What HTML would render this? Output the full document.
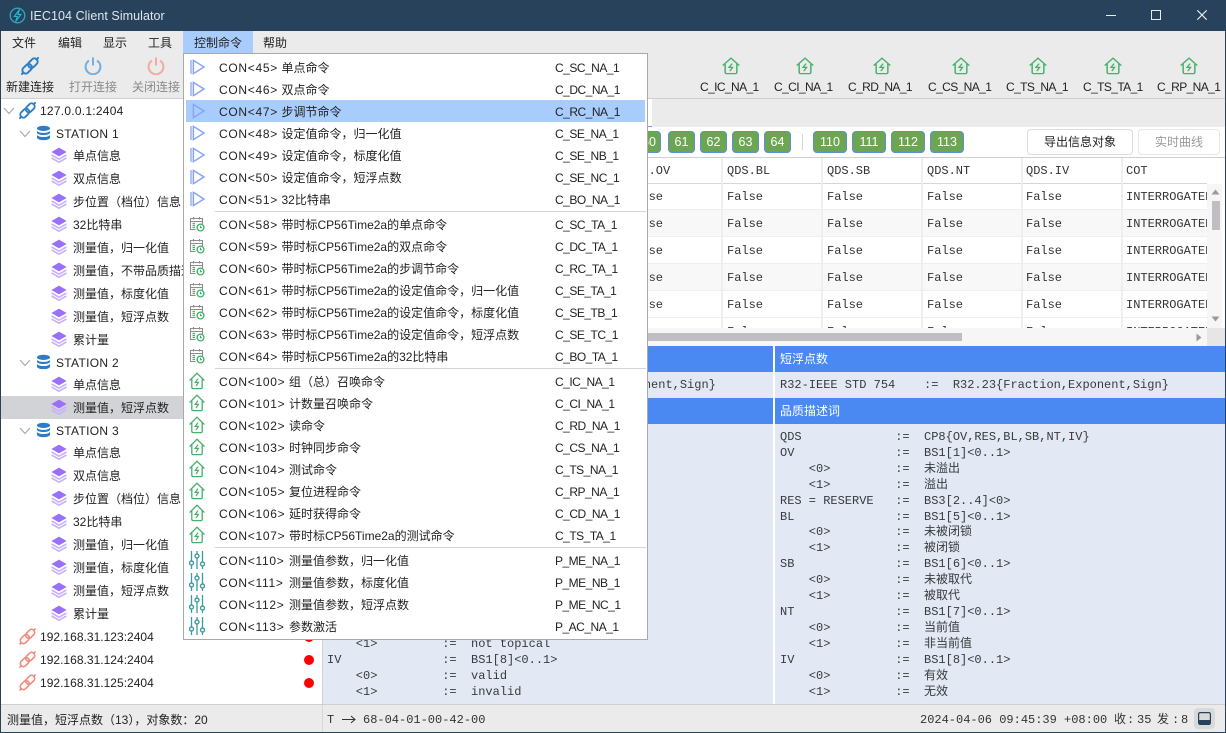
<!DOCTYPE html>
<html><head><meta charset="utf-8"><title>IEC104 Client Simulator</title>
<style>
html,body{margin:0;padding:0}
body{position:relative;width:1226px;height:733px;overflow:hidden;background:#fff;font:12px/16px "Liberation Sans","Noto Sans CJK SC",sans-serif;color:#222}
.r{position:absolute}
.t{position:absolute;white-space:pre;line-height:16px}
.i{position:absolute;overflow:visible}
.mo{font-family:"Liberation Mono","Noto Sans CJK SC",monospace;color:#333}
.pn{position:absolute;white-space:pre;font:12px/15.9px "Liberation Mono","Noto Sans CJK SC",monospace;color:#3a3a3a;margin:0}
.hd{position:absolute;background:#4a88f2;color:#fff;line-height:26px;padding-left:5px;box-sizing:border-box}
.g{position:absolute;top:131px;height:22px;line-height:20px;box-sizing:border-box;background:#6ca653;border:1px solid #5b8fd8;border-radius:4px;color:#fff;text-align:center;font-size:12.5px}
.mi{position:absolute;left:219px;white-space:pre;line-height:16px;color:#222}
.mi a{display:inline-block;letter-spacing:.7px;width:62.5px}
.mi a.w{width:70px}
.co{position:absolute;left:555px;letter-spacing:-.5px;line-height:16px;white-space:pre}
.sp{position:absolute;left:215px;width:431px;height:1px;background:#d4d4d4}
.tb{letter-spacing:-.6px}
.cl{position:absolute;top:158px;width:2px;height:170px;background:#efefef}
.rw{position:absolute;left:323px;width:884px;height:27px}
.w0{position:absolute;left:0;top:1px}
</style></head>
<body>
<svg width="0" height="0" style="position:absolute">
<defs>
<symbol id="play" viewBox="0 0 16 16"><rect x="1" y="1" width="2.2" height="14" fill="#b3c4fb"/><path d="M4.4 1.4 15 8 4.4 14.6Z" fill="none" stroke="#86a4f7" stroke-width="1.4"/></symbol>
<symbol id="cal" viewBox="0 0 16 16"><path d="M6.5 13.5H1.5V2.5H13.5V8M1.5 5.5H13.5M4.5 1V3.5M10.5 1V3.5" fill="none" stroke="#8d8d8d" stroke-width="1.1"/><path d="M3.5 7.5H6M3.5 9.5H6M3.5 11.5H6" stroke="#4caf6a" stroke-width="1.2"/><circle cx="11.5" cy="11.5" r="3.4" fill="#fff" stroke="#3bb067" stroke-width="1.3"/><path d="M11.5 9.8V11.7H13" fill="none" stroke="#3bb067"/></symbol>
<symbol id="house" viewBox="0 0 16 18" preserveAspectRatio="none"><path d="M.6 8.6 8 1.2 15.4 8.6M2.8 7V15.2Q2.8 16.6 4.2 16.6H11.8Q13.2 16.6 13.2 15.2V7" fill="none" stroke="#45b06c" stroke-width="1.3"/><path d="M9 6.6 6.2 10.4H9.4L7 14" fill="none" stroke="#45b06c" stroke-width="1.2"/></symbol>
<symbol id="sl" viewBox="0 0 16 18"><path d="M2.5 0V18M8 0V18M13.5 0V18" stroke="#3c9aa0" stroke-width="1.3"/><circle cx="2.5" cy="12" r="2" fill="#fff" stroke="#3c9aa0" stroke-width="1.4"/><circle cx="8" cy="5" r="2" fill="#fff" stroke="#3c9aa0" stroke-width="1.4"/><circle cx="13.5" cy="13" r="2" fill="#fff" stroke="#3c9aa0" stroke-width="1.4"/></symbol>
<symbol id="lb" viewBox="0 0 18 18"><g fill="none" stroke="#2f7fc8" stroke-width="2" stroke-linecap="round"><rect x=".9" y="8.55" width="10.5" height="6.5" rx="3" transform="rotate(-45 6.15 11.8)"/><rect x="6.6" y="2.95" width="10.5" height="6.5" rx="3" transform="rotate(-45 11.85 6.2)"/><path d="M2.2 15.8 1 17M15.8 2.2 17 1"/></g></symbol>
<symbol id="lr" viewBox="0 0 18 18"><g fill="none" stroke="#ef8b7d" stroke-width="1.7" stroke-linecap="round"><rect x=".9" y="8.55" width="10.5" height="6.5" rx="3" transform="rotate(-45 6.15 11.8)"/><rect x="6.6" y="2.95" width="10.5" height="6.5" rx="3" transform="rotate(-45 11.85 6.2)"/><path d="M2.2 15.8 1 17M15.8 2.2 17 1"/></g></symbol>
<symbol id="db" viewBox="0 0 16 16"><g fill="#2f7cc4"><ellipse cx="8" cy="3" rx="7" ry="2.8"/><path d="M1 5V7.4C1 9 4 10.1 8 10.1S15 9 15 7.4V5C15 6.7 12 7.8 8 7.8S1 6.7 1 5Z"/><path d="M1 9.5V12.6C1 14.3 4 15.6 8 15.6S15 14.3 15 12.6V9.5C15 11.2 12 12.3 8 12.3S1 11.2 1 9.5Z"/></g></symbol>
<symbol id="ly" viewBox="0 0 16 16"><path d="M8 .6 15.6 5 8 9.4 .4 5Z" fill="#9a6ffa"/><path d="M.6 8 8 12.2 15.4 8M.6 11 8 15.2 15.4 11" fill="none" stroke="#c8b2fb" stroke-width="1.6"/></symbol>
<symbol id="ch" viewBox="0 0 12 8"><path d="M1 1 6 6.5 11 1" fill="none" stroke="#a8a8a8" stroke-width="1.1"/></symbol>
<symbol id="pw" viewBox="0 0 18 18"><path d="M5 3.6A7.4 7.4 0 1 0 13 3.6" fill="none" stroke="currentColor" stroke-width="2"/><path d="M9 .5V8.5" stroke="currentColor" stroke-width="2"/></symbol>
</defs>
</svg>

<!-- Title bar -->
<div class="r" style="left:0;top:0;width:1226px;height:31px;background:#27425a"></div>
<svg class="i" style="left:9px;top:7px" width="17" height="17" viewBox="0 0 17 17"><circle cx="8.5" cy="8.5" r="7.3" fill="none" stroke="#2aa7b8" stroke-width="1.4"/><path d="M10.5 2.5 5.2 9.4H8.4L6.6 14.6 12 7.4H8.8Z" fill="#27425a" stroke="#2bb6d6" stroke-width="1.1"/></svg>
<div class="t" style="left:30px;top:8px;color:#dfe6ec;font-size:12.5px;letter-spacing:.06px">IEC104 Client Simulator</div>
<div class="r" style="left:1106px;top:15px;width:10px;height:1px;background:#e8edf0"></div>
<div class="r" style="left:1151px;top:10px;width:8px;height:8px;border:1px solid #e8edf0"></div>
<svg class="i" style="left:1197px;top:10px" width="10" height="10" viewBox="0 0 10 10"><path d="M.3.3 9.7 9.7M9.7.3.3 9.7" stroke="#e8edf0" stroke-width="1.1"/></svg>

<!-- Menu bar + toolbar -->
<div class="r" style="left:1px;top:31px;width:1224px;height:67px;background:#ebebeb"></div>
<div class="r" style="left:1px;top:98px;width:1224px;height:1px;background:#cfcfcf"></div>
<div class="r" style="left:183px;top:31px;width:70px;height:22px;background:#a8cdfc"></div>
<div class="t" style="left:12px;top:35px">文件</div>
<div class="t" style="left:58px;top:35px">编辑</div>
<div class="t" style="left:103px;top:35px">显示</div>
<div class="t" style="left:148px;top:35px">工具</div>
<div class="t" style="left:194px;top:35px">控制命令</div>
<div class="t" style="left:263px;top:35px">帮助</div>

<svg class="i" style="left:21px;top:57px" width="18" height="18"><use href="#lb"/></svg>
<svg class="i" style="left:84px;top:57px;color:#76aedd" width="18" height="18"><use href="#pw"/></svg>
<svg class="i" style="left:147px;top:57px;color:#f3aaa3" width="18" height="18"><use href="#pw"/></svg>
<div class="t" style="left:6px;top:79px">新建连接</div>
<div class="t" style="left:69px;top:79px;color:#8a8a8a">打开连接</div>
<div class="t" style="left:132px;top:79px;color:#8a8a8a">关闭连接</div>

<svg class="i" style="left:722px;top:57px" width="18" height="18"><use href="#house"/></svg>
<svg class="i" style="left:796px;top:57px" width="18" height="18"><use href="#house"/></svg>
<svg class="i" style="left:873px;top:57px" width="18" height="18"><use href="#house"/></svg>
<svg class="i" style="left:952px;top:57px" width="18" height="18"><use href="#house"/></svg>
<svg class="i" style="left:1029px;top:57px" width="18" height="18"><use href="#house"/></svg>
<svg class="i" style="left:1104px;top:57px" width="18" height="18"><use href="#house"/></svg>
<svg class="i" style="left:1180px;top:57px" width="18" height="18"><use href="#house"/></svg>
<div class="t tb" style="left:700px;top:79px">C_IC_NA_1</div>
<div class="t tb" style="left:774px;top:79px">C_CI_NA_1</div>
<div class="t tb" style="left:848px;top:79px">C_RD_NA_1</div>
<div class="t tb" style="left:928px;top:79px">C_CS_NA_1</div>
<div class="t tb" style="left:1006px;top:79px">C_TS_NA_1</div>
<div class="t tb" style="left:1083px;top:79px">C_TS_TA_1</div>
<div class="t tb" style="left:1157px;top:79px">C_RP_NA_1</div>

<!-- Tab strip and button row -->
<div class="r" style="left:323px;top:99px;width:902px;height:28px;background:#ebebeb"></div>
<div class="r" style="left:323px;top:99px;width:329px;height:28px;background:#fff;border-bottom:1px solid #6aa0f0;box-sizing:border-box"></div>
<div class="g" style="left:630px;width:31px">&nbsp;&nbsp;60</div>
<div class="g" style="left:668px;width:27px">61</div>
<div class="g" style="left:700px;width:27px">62</div>
<div class="g" style="left:732px;width:27px">63</div>
<div class="g" style="left:764px;width:27px">64</div>
<div class="r" style="left:802px;top:134px;width:1px;height:16px;background:#d5d5d5"></div>
<div class="g" style="left:813px;width:34px">110</div>
<div class="g" style="left:852px;width:34px">111</div>
<div class="g" style="left:891px;width:34px">112</div>
<div class="g" style="left:930px;width:34px">113</div>
<div class="r" style="left:1027px;top:129px;width:106px;height:26px;border:1px solid #dcdcdc;border-radius:4px;box-sizing:border-box;text-align:center;line-height:24px;background:#fff">导出信息对象</div>
<div class="r" style="left:1138px;top:129px;width:82px;height:26px;border:1px solid #e6e6e6;border-radius:4px;box-sizing:border-box;text-align:center;line-height:24px;background:#fff;color:#9a9a9a">实时曲线</div>

<!-- Table -->
<div class="r" style="left:323px;top:157px;width:902px;height:1px;background:#cfcfcf"></div>
<div class="r" style="left:323px;top:183px;width:884px;height:1px;background:#d6d6d6"></div>
<div class="rw" style="top:209px;background:#f8f8f8"></div>
<div class="rw" style="top:263px;background:#f8f8f8"></div>
<div class="rw" style="top:236px;height:1px;background:#efefef"></div>
<div class="rw" style="top:290px;height:1px;background:#efefef"></div>
<div class="rw" style="top:317px;height:1px;background:#efefef"></div>
<div class="rw" style="top:209px;height:1px;background:#efefef"></div>
<div class="rw" style="top:263px;height:1px;background:#efefef"></div>
<div class="cl" style="left:621px"></div><div class="cl" style="left:721px"></div><div class="cl" style="left:821px"></div><div class="cl" style="left:921px"></div><div class="cl" style="left:1021px"></div><div class="cl" style="left:1121px"></div>

<div class="t mo" style="left:627px;top:163px">QDS.OV</div><div class="t mo" style="left:727px;top:163px">QDS.BL</div><div class="t mo" style="left:827px;top:163px">QDS.SB</div><div class="t mo" style="left:927px;top:163px">QDS.NT</div><div class="t mo" style="left:1026px;top:163px">QDS.IV</div><div class="t mo" style="left:1126px;top:163px">COT</div>

<div class="r" style="left:323px;top:184px;width:884px;height:144px;overflow:hidden">
<div class="t mo" style="left:304px;top:5px">False</div><div class="t mo" style="left:404px;top:5px">False</div><div class="t mo" style="left:504px;top:5px">False</div><div class="t mo" style="left:604px;top:5px">False</div><div class="t mo" style="left:703px;top:5px">False</div><div class="t mo" style="left:803px;top:5px">INTERROGATED</div>
<div class="t mo" style="left:304px;top:32px">False</div><div class="t mo" style="left:404px;top:32px">False</div><div class="t mo" style="left:504px;top:32px">False</div><div class="t mo" style="left:604px;top:32px">False</div><div class="t mo" style="left:703px;top:32px">False</div><div class="t mo" style="left:803px;top:32px">INTERROGATED</div>
<div class="t mo" style="left:304px;top:59px">False</div><div class="t mo" style="left:404px;top:59px">False</div><div class="t mo" style="left:504px;top:59px">False</div><div class="t mo" style="left:604px;top:59px">False</div><div class="t mo" style="left:703px;top:59px">False</div><div class="t mo" style="left:803px;top:59px">INTERROGATED</div>
<div class="t mo" style="left:304px;top:86px">False</div><div class="t mo" style="left:404px;top:86px">False</div><div class="t mo" style="left:504px;top:86px">False</div><div class="t mo" style="left:604px;top:86px">False</div><div class="t mo" style="left:703px;top:86px">False</div><div class="t mo" style="left:803px;top:86px">INTERROGATED</div>
<div class="t mo" style="left:304px;top:113px">False</div><div class="t mo" style="left:404px;top:113px">False</div><div class="t mo" style="left:504px;top:113px">False</div><div class="t mo" style="left:604px;top:113px">False</div><div class="t mo" style="left:703px;top:113px">False</div><div class="t mo" style="left:803px;top:113px">INTERROGATED</div>
<div class="t mo" style="left:304px;top:140px">False</div><div class="t mo" style="left:404px;top:140px">False</div><div class="t mo" style="left:504px;top:140px">False</div><div class="t mo" style="left:604px;top:140px">False</div><div class="t mo" style="left:703px;top:140px">False</div><div class="t mo" style="left:803px;top:140px">INTERROGATED</div>
</div>

<!-- Scrollbars -->
<div class="r" style="left:1207px;top:184px;width:15px;height:144px;background:#f6f6f6"></div>
<div class="r" style="left:1212px;top:201px;width:8px;height:29px;background:#bfbfc3"></div>
<svg class="i" style="left:1211px;top:189px" width="9" height="6"><path d="M.5 5.5 4.5 .5 8.5 5.5Z" fill="#9a9a9a"/></svg>
<svg class="i" style="left:1211px;top:316px" width="9" height="6"><path d="M.5 .5 4.5 5.5 8.5 .5Z" fill="#9a9a9a"/></svg>
<div class="r" style="left:323px;top:328px;width:884px;height:18px;background:#f6f6f6"></div>
<div class="r" style="left:340px;top:333px;width:622px;height:8px;background:#bfbfc3"></div>
<svg class="i" style="left:1196px;top:333px" width="6" height="9"><path d="M.5 .5 5.5 4.5 .5 8.5Z" fill="#9a9a9a"/></svg>
<div class="r" style="left:1207px;top:328px;width:19px;height:18px;background:#e6e6e6"></div>

<!-- Info panels -->
<div class="r" style="left:323px;top:346px;width:902px;height:358px;background:#fff"></div>
<div class="hd" style="left:323px;top:346px;width:450px">短浮点数</div>
<div class="hd" style="left:775px;top:346px;width:450px">短浮点数</div>
<div class="r" style="left:323px;top:372px;width:450px;height:26px;background:#e2e8f4"></div>
<div class="r" style="left:775px;top:372px;width:450px;height:26px;background:#e2e8f4"></div>
<pre class="pn" style="left:327px;top:378px">R32-IEEE STD 754    :=  R32.23{Fraction,Exponent,Sign}</pre>
<pre class="pn" style="left:780px;top:378px">R32-IEEE STD 754    :=  R32.23{Fraction,Exponent,Sign}</pre>
<div class="hd" style="left:323px;top:398px;width:450px">Quality</div>
<div class="hd" style="left:775px;top:398px;width:450px">品质描述词</div>
<div class="r" style="left:323px;top:424px;width:450px;height:280px;background:#e2e8f4"></div>
<div class="r" style="left:775px;top:424px;width:450px;height:280px;background:#e2e8f4"></div>
<pre class="pn" style="left:327px;top:430px">QDS             :=  CP8{OV,RES,BL,SB,NT,IV}
OV              :=  BS1[1]&lt;0..1&gt;
    &lt;0&gt;         :=  no overflow
    &lt;1&gt;         :=  overflow
RES = RESERVE   :=  BS3[2..4]&lt;0&gt;
BL              :=  BS1[5]&lt;0..1&gt;
    &lt;0&gt;         :=  not blocked
    &lt;1&gt;         :=  blocked
SB              :=  BS1[6]&lt;0..1&gt;
    &lt;0&gt;         :=  not substituted
    &lt;1&gt;         :=  substituted
NT              :=  BS1[7]&lt;0..1&gt;
    &lt;0&gt;         :=  topical
    &lt;1&gt;         :=  not topical
IV              :=  BS1[8]&lt;0..1&gt;
    &lt;0&gt;         :=  valid
    &lt;1&gt;         :=  invalid</pre>
<pre class="pn" style="left:780px;top:430px">QDS             :=  CP8{OV,RES,BL,SB,NT,IV}
OV              :=  BS1[1]&lt;0..1&gt;
    &lt;0&gt;         :=  未溢出
    &lt;1&gt;         :=  溢出
RES = RESERVE   :=  BS3[2..4]&lt;0&gt;
BL              :=  BS1[5]&lt;0..1&gt;
    &lt;0&gt;         :=  未被闭锁
    &lt;1&gt;         :=  被闭锁
SB              :=  BS1[6]&lt;0..1&gt;
    &lt;0&gt;         :=  未被取代
    &lt;1&gt;         :=  被取代
NT              :=  BS1[7]&lt;0..1&gt;
    &lt;0&gt;         :=  当前值
    &lt;1&gt;         :=  非当前值
IV              :=  BS1[8]&lt;0..1&gt;
    &lt;0&gt;         :=  有效
    &lt;1&gt;         :=  无效</pre>

<!-- Tree -->
<div class="r" style="left:322px;top:99px;width:1px;height:605px;background:#cfcfcf"></div>
<div class="r" style="left:1px;top:396px;width:321px;height:23px;background:#d2d3d6"></div>

<svg class="i" style="left:3px;top:107px" width="12" height="8"><use href="#ch"/></svg>
<svg class="i" style="left:19px;top:130px" width="12" height="8"><use href="#ch"/></svg>
<svg class="i" style="left:19px;top:359px" width="12" height="8"><use href="#ch"/></svg>
<svg class="i" style="left:19px;top:427px" width="12" height="8"><use href="#ch"/></svg>
<svg class="i" style="left:19px;top:102px" width="17" height="17"><use href="#lb"/></svg>
<svg class="i" style="left:36px;top:125px" width="15" height="16"><use href="#db"/></svg>
<svg class="i" style="left:36px;top:354px" width="15" height="16"><use href="#db"/></svg>
<svg class="i" style="left:36px;top:422px" width="15" height="16"><use href="#db"/></svg>
<svg class="i" style="left:19px;top:628px" width="17" height="17"><use href="#lr"/></svg>
<svg class="i" style="left:19px;top:651px" width="17" height="17"><use href="#lr"/></svg>
<svg class="i" style="left:19px;top:674px" width="17" height="17"><use href="#lr"/></svg>

<svg class="i" style="left:51px;top:147px" width="16" height="16"><use href="#ly"/></svg>
<svg class="i" style="left:51px;top:170px" width="16" height="16"><use href="#ly"/></svg>
<svg class="i" style="left:51px;top:193px" width="16" height="16"><use href="#ly"/></svg>
<svg class="i" style="left:51px;top:216px" width="16" height="16"><use href="#ly"/></svg>
<svg class="i" style="left:51px;top:239px" width="16" height="16"><use href="#ly"/></svg>
<svg class="i" style="left:51px;top:262px" width="16" height="16"><use href="#ly"/></svg>
<svg class="i" style="left:51px;top:285px" width="16" height="16"><use href="#ly"/></svg>
<svg class="i" style="left:51px;top:308px" width="16" height="16"><use href="#ly"/></svg>
<svg class="i" style="left:51px;top:331px" width="16" height="16"><use href="#ly"/></svg>
<svg class="i" style="left:51px;top:376px" width="16" height="16"><use href="#ly"/></svg>
<svg class="i" style="left:51px;top:399px" width="16" height="16"><use href="#ly"/></svg>
<svg class="i" style="left:51px;top:444px" width="16" height="16"><use href="#ly"/></svg>
<svg class="i" style="left:51px;top:467px" width="16" height="16"><use href="#ly"/></svg>
<svg class="i" style="left:51px;top:490px" width="16" height="16"><use href="#ly"/></svg>
<svg class="i" style="left:51px;top:513px" width="16" height="16"><use href="#ly"/></svg>
<svg class="i" style="left:51px;top:536px" width="16" height="16"><use href="#ly"/></svg>
<svg class="i" style="left:51px;top:559px" width="16" height="16"><use href="#ly"/></svg>
<svg class="i" style="left:51px;top:582px" width="16" height="16"><use href="#ly"/></svg>
<svg class="i" style="left:51px;top:605px" width="16" height="16"><use href="#ly"/></svg>

<div class="w0">
<div class="t" style="left:40px;top:102px;letter-spacing:.25px">127.0.0.1:2404</div>
<div class="t" style="left:56px;top:125px;letter-spacing:.3px">STATION 1</div>
<div class="t" style="left:73px;top:147px">单点信息</div>
<div class="t" style="left:73px;top:170px">双点信息</div>
<div class="t" style="left:73px;top:193px">步位置（档位）信息</div>
<div class="t" style="left:73px;top:216px">32比特串</div>
<div class="t" style="left:73px;top:239px">测量值，归一化值</div>
<div class="t" style="left:73px;top:262px">测量值，不带品质描述</div>
<div class="t" style="left:73px;top:285px">测量值，标度化值</div>
<div class="t" style="left:73px;top:308px">测量值，短浮点数</div>
<div class="t" style="left:73px;top:331px">累计量</div>
<div class="t" style="left:56px;top:354px;letter-spacing:.3px">STATION 2</div>
<div class="t" style="left:73px;top:376px">单点信息</div>
<div class="t" style="left:73px;top:399px">测量值，短浮点数</div>
<div class="t" style="left:56px;top:422px;letter-spacing:.3px">STATION 3</div>
<div class="t" style="left:73px;top:444px">单点信息</div>
<div class="t" style="left:73px;top:467px">双点信息</div>
<div class="t" style="left:73px;top:490px">步位置（档位）信息</div>
<div class="t" style="left:73px;top:513px">32比特串</div>
<div class="t" style="left:73px;top:536px">测量值，归一化值</div>
<div class="t" style="left:73px;top:559px">测量值，标度化值</div>
<div class="t" style="left:73px;top:582px">测量值，短浮点数</div>
<div class="t" style="left:73px;top:605px">累计量</div>
<div class="t" style="left:40px;top:628px;letter-spacing:.02px">192.168.31.123:2404</div>
<div class="t" style="left:40px;top:651px;letter-spacing:.02px">192.168.31.124:2404</div>
<div class="t" style="left:40px;top:674px;letter-spacing:.02px">192.168.31.125:2404</div>
</div>
<div class="r" style="left:304px;top:632px;width:10px;height:10px;border-radius:50%;background:#f00"></div>
<div class="r" style="left:304px;top:655px;width:10px;height:10px;border-radius:50%;background:#f00"></div>
<div class="r" style="left:304px;top:678px;width:10px;height:10px;border-radius:50%;background:#f00"></div>

<!-- Status bar -->
<div class="r" style="left:1px;top:704px;width:1224px;height:28px;background:#ebebeb;border-top:1px solid #cfcfcf;box-sizing:border-box"></div>
<div class="r" style="left:322px;top:705px;width:1px;height:27px;background:#d8d8d8"></div>
<div class="t" style="left:7px;top:712px">测量值，短浮点数（13），对象数：20</div>
<div class="t mo" style="left:327px;top:712px">T</div>
<svg class="i" style="left:342px;top:715px" width="14" height="9"><path d="M0 4.5H13M9 1 13 4.5 9 8" fill="none" stroke="#333" stroke-width="1"/></svg>
<div class="t mo" style="left:363px;top:712px">68-04-01-00-42-00</div>
<div class="t mo" style="left:920px;top:712px">2024-04-06 09:45:39 +08:00</div>
<div class="t mo" style="left:1114px;top:712px">收</div>
<div class="t mo" style="left:1127px;top:712px">:</div>
<div class="t mo" style="left:1137px;top:712px">35</div>
<div class="t mo" style="left:1157px;top:712px">发</div>
<div class="t mo" style="left:1172px;top:712px">:</div>
<div class="t mo" style="left:1181px;top:712px">8</div>
<div class="r" style="left:1194px;top:708px;width:21px;height:21px;border-radius:4px;background:#d9d9d9"></div>
<svg class="i" style="left:1198px;top:712px" width="13" height="13"><rect x=".6" y=".6" width="11.8" height="11.8" rx="1.5" fill="none" stroke="#27425a" stroke-width="1.2"/><rect x="1" y="8" width="11" height="4.4" fill="#27425a"/></svg>

<!-- Dropdown menu -->
<div class="r" style="left:183px;top:53px;width:465px;height:587px;background:#fff;border:1px solid #a9a9a9;box-sizing:border-box"></div>
<div class="r" style="left:186px;top:100px;width:459px;height:22px;background:#a8cdfc"></div>
<div class="sp" style="top:211px"></div><div class="sp" style="top:368px"></div><div class="sp" style="top:547px"></div>

<svg class="i" style="left:189px;top:59px" width="16" height="16"><use href="#play"/></svg>
<svg class="i" style="left:189px;top:81px" width="16" height="16"><use href="#play"/></svg>
<svg class="i" style="left:189px;top:103px" width="16" height="16"><use href="#play"/></svg>
<svg class="i" style="left:189px;top:125px" width="16" height="16"><use href="#play"/></svg>
<svg class="i" style="left:189px;top:147px" width="16" height="16"><use href="#play"/></svg>
<svg class="i" style="left:189px;top:169px" width="16" height="16"><use href="#play"/></svg>
<svg class="i" style="left:189px;top:191px" width="16" height="16"><use href="#play"/></svg>
<svg class="i" style="left:189px;top:216px" width="16" height="16"><use href="#cal"/></svg>
<svg class="i" style="left:189px;top:238px" width="16" height="16"><use href="#cal"/></svg>
<svg class="i" style="left:189px;top:260px" width="16" height="16"><use href="#cal"/></svg>
<svg class="i" style="left:189px;top:282px" width="16" height="16"><use href="#cal"/></svg>
<svg class="i" style="left:189px;top:304px" width="16" height="16"><use href="#cal"/></svg>
<svg class="i" style="left:189px;top:326px" width="16" height="16"><use href="#cal"/></svg>
<svg class="i" style="left:189px;top:348px" width="16" height="16"><use href="#cal"/></svg>
<svg class="i" style="left:189px;top:372px" width="16" height="18"><use href="#house"/></svg>
<svg class="i" style="left:189px;top:394px" width="16" height="18"><use href="#house"/></svg>
<svg class="i" style="left:189px;top:416px" width="16" height="18"><use href="#house"/></svg>
<svg class="i" style="left:189px;top:438px" width="16" height="18"><use href="#house"/></svg>
<svg class="i" style="left:189px;top:460px" width="16" height="18"><use href="#house"/></svg>
<svg class="i" style="left:189px;top:482px" width="16" height="18"><use href="#house"/></svg>
<svg class="i" style="left:189px;top:504px" width="16" height="18"><use href="#house"/></svg>
<svg class="i" style="left:189px;top:526px" width="16" height="18"><use href="#house"/></svg>
<svg class="i" style="left:189px;top:551px" width="16" height="18"><use href="#sl"/></svg>
<svg class="i" style="left:189px;top:573px" width="16" height="18"><use href="#sl"/></svg>
<svg class="i" style="left:189px;top:595px" width="16" height="18"><use href="#sl"/></svg>
<svg class="i" style="left:189px;top:617px" width="16" height="18"><use href="#sl"/></svg>

<div class="w0">
<div class="mi" style="top:59px"><a>CON&lt;45&gt;</a>单点命令</div><div class="co" style="top:59px">C_SC_NA_1</div>
<div class="mi" style="top:81px"><a>CON&lt;46&gt;</a>双点命令</div><div class="co" style="top:81px">C_DC_NA_1</div>
<div class="mi" style="top:103px"><a>CON&lt;47&gt;</a>步调节命令</div><div class="co" style="top:103px">C_RC_NA_1</div>
<div class="mi" style="top:125px"><a>CON&lt;48&gt;</a>设定值命令，归一化值</div><div class="co" style="top:125px">C_SE_NA_1</div>
<div class="mi" style="top:147px"><a>CON&lt;49&gt;</a>设定值命令，标度化值</div><div class="co" style="top:147px">C_SE_NB_1</div>
<div class="mi" style="top:169px"><a>CON&lt;50&gt;</a>设定值命令，短浮点数</div><div class="co" style="top:169px">C_SE_NC_1</div>
<div class="mi" style="top:191px"><a>CON&lt;51&gt;</a>32比特串</div><div class="co" style="top:191px">C_BO_NA_1</div>
<div class="mi" style="top:216px"><a>CON&lt;58&gt;</a>带时标CP56Time2a的单点命令</div><div class="co" style="top:216px">C_SC_TA_1</div>
<div class="mi" style="top:238px"><a>CON&lt;59&gt;</a>带时标CP56Time2a的双点命令</div><div class="co" style="top:238px">C_DC_TA_1</div>
<div class="mi" style="top:260px"><a>CON&lt;60&gt;</a>带时标CP56Time2a的步调节命令</div><div class="co" style="top:260px">C_RC_TA_1</div>
<div class="mi" style="top:282px"><a>CON&lt;61&gt;</a>带时标CP56Time2a的设定值命令，归一化值</div><div class="co" style="top:282px">C_SE_TA_1</div>
<div class="mi" style="top:304px"><a>CON&lt;62&gt;</a>带时标CP56Time2a的设定值命令，标度化值</div><div class="co" style="top:304px">C_SE_TB_1</div>
<div class="mi" style="top:326px"><a>CON&lt;63&gt;</a>带时标CP56Time2a的设定值命令，短浮点数</div><div class="co" style="top:326px">C_SE_TC_1</div>
<div class="mi" style="top:348px"><a>CON&lt;64&gt;</a>带时标CP56Time2a的32比特串</div><div class="co" style="top:348px">C_BO_TA_1</div>
<div class="mi" style="top:373px"><a class="w">CON&lt;100&gt;</a>组（总）召唤命令</div><div class="co" style="top:373px">C_IC_NA_1</div>
<div class="mi" style="top:395px"><a class="w">CON&lt;101&gt;</a>计数量召唤命令</div><div class="co" style="top:395px">C_CI_NA_1</div>
<div class="mi" style="top:417px"><a class="w">CON&lt;102&gt;</a>读命令</div><div class="co" style="top:417px">C_RD_NA_1</div>
<div class="mi" style="top:439px"><a class="w">CON&lt;103&gt;</a>时钟同步命令</div><div class="co" style="top:439px">C_CS_NA_1</div>
<div class="mi" style="top:461px"><a class="w">CON&lt;104&gt;</a>测试命令</div><div class="co" style="top:461px">C_TS_NA_1</div>
<div class="mi" style="top:483px"><a class="w">CON&lt;105&gt;</a>复位进程命令</div><div class="co" style="top:483px">C_RP_NA_1</div>
<div class="mi" style="top:505px"><a class="w">CON&lt;106&gt;</a>延时获得命令</div><div class="co" style="top:505px">C_CD_NA_1</div>
<div class="mi" style="top:527px"><a class="w">CON&lt;107&gt;</a>带时标CP56Time2a的测试命令</div><div class="co" style="top:527px">C_TS_TA_1</div>
<div class="mi" style="top:552px"><a class="w">CON&lt;110&gt;</a>测量值参数，归一化值</div><div class="co" style="top:552px">P_ME_NA_1</div>
<div class="mi" style="top:574px"><a class="w">CON&lt;111&gt;</a>测量值参数，标度化值</div><div class="co" style="top:574px">P_ME_NB_1</div>
<div class="mi" style="top:596px"><a class="w">CON&lt;112&gt;</a>测量值参数，短浮点数</div><div class="co" style="top:596px">P_ME_NC_1</div>
<div class="mi" style="top:618px"><a class="w">CON&lt;113&gt;</a>参数激活</div><div class="co" style="top:618px">P_AC_NA_1</div>
</div>

<!-- Window border -->
<div class="r" style="left:0;top:0;width:1226px;height:733px;border:1px solid #27425a;box-sizing:border-box;pointer-events:none"></div>
</body></html>
